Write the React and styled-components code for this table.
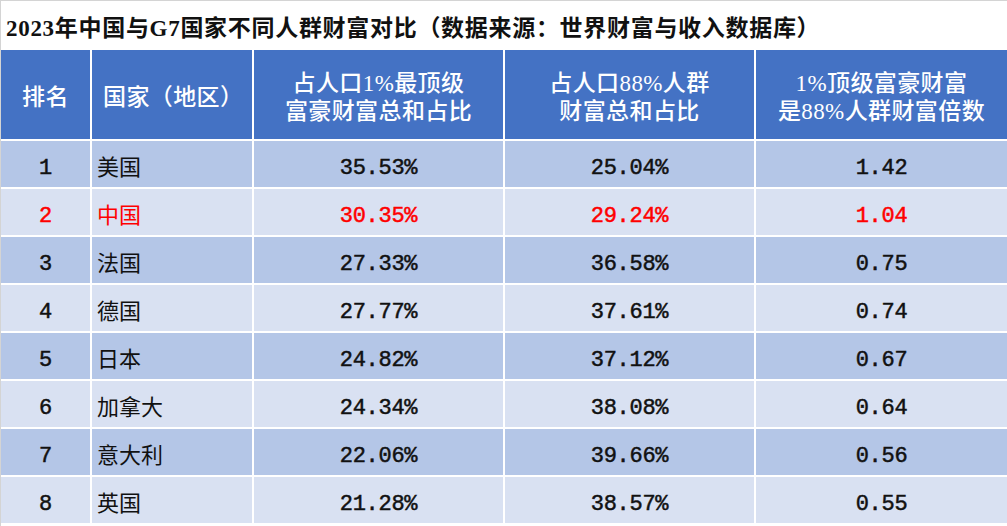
import React from "react";
import styled, { createGlobalStyle } from "styled-components";

const Global = createGlobalStyle`
  html, body {
    margin: 0;
    padding: 0;
    background: #ffffff;
  }
  body {
    font-family: "Liberation Serif", "Noto Sans CJK SC", serif;
  }
`;

const Page = styled.div`
  width: 1007px;
  height: 526px;
  overflow: hidden;
  border-top: 1px solid #d4d4d4;
  border-left: 1px solid #d4d4d4;
  box-sizing: border-box;
`;

const Title = styled.div`
  height: 49px;
  display: flex;
  align-items: center;
  padding-left: 5px;
  font-family: "Liberation Serif", "Noto Sans CJK SC", serif;
  font-size: 23px;
  font-weight: 700;
  letter-spacing: 0.7px;
  color: #111;
  white-space: nowrap;
`;

const Grid = styled.div`
  display: grid;
  grid-template-columns: 89px 160px 249px 249px 1fr;
  grid-template-rows: 89px repeat(8, 46px);
  gap: 2px;
  background: #ffffff;
`;

const HeadCell = styled.div`
  background: #4472c4;
  color: #ffffff;
  display: flex;
  align-items: center;
  justify-content: ${(p) => (p.left ? "flex-start" : "center")};
  padding-left: ${(p) => (p.left ? "11px" : "0")};
  padding-top: 6px;
  text-align: center;
  font-family: "Liberation Serif", "Noto Sans CJK SC", serif;
  font-size: 23px;
  line-height: 28px;
  letter-spacing: 0.4px;
  font-weight: 500;
`;

const Cell = styled.div`
  background: ${(p) => (p.dark ? "#b4c6e7" : "#d9e1f2")};
  color: ${(p) => (p.red ? "#ff0000" : "#111111")};
  display: flex;
  align-items: center;
  justify-content: ${(p) => (p.left ? "flex-start" : "center")};
  padding-left: ${(p) => (p.left ? "5px" : "0")};
  padding-top: 1px;
  box-sizing: border-box;
  font-family: "Noto Sans CJK SC", serif;
  font-size: 22px;
`;

const Num = styled.span`
  display: inline-block;
  margin-top: 7px;
  font-family: "Liberation Mono", monospace;
  font-size: 22px;
  font-weight: 400;
  -webkit-text-stroke: 0.5px currentColor;
  letter-spacing: -0.3px;
`;

const rows = [
  ["1", "美国", "35.53%", "25.04%", "1.42"],
  ["2", "中国", "30.35%", "29.24%", "1.04"],
  ["3", "法国", "27.33%", "36.58%", "0.75"],
  ["4", "德国", "27.77%", "37.61%", "0.74"],
  ["5", "日本", "24.82%", "37.12%", "0.67"],
  ["6", "加拿大", "24.34%", "38.08%", "0.64"],
  ["7", "意大利", "22.06%", "39.66%", "0.56"],
  ["8", "英国", "21.28%", "38.57%", "0.55"],
];

export default function App() {
  return (
    <Page>
      <Global />
      <Title>2023年中国与G7国家不同人群财富对比（数据来源：世界财富与收入数据库）</Title>
      <Grid>
        <HeadCell>排名</HeadCell>
        <HeadCell left>国家（地区）</HeadCell>
        <HeadCell>
          占人口1%最顶级
          <br />
          富豪财富总和占比
        </HeadCell>
        <HeadCell>
          占人口88%人群
          <br />
          财富总和占比
        </HeadCell>
        <HeadCell>
          1%顶级富豪财富
          <br />
          是88%人群财富倍数
        </HeadCell>
        {rows.map((r, i) => {
          const dark = i % 2 === 0;
          const red = r[1] === "中国";
          return (
            <React.Fragment key={r[0]}>
              <Cell dark={dark} red={red}>
                <Num>{r[0]}</Num>
              </Cell>
              <Cell dark={dark} red={red} left>
                {r[1]}
              </Cell>
              <Cell dark={dark} red={red}>
                <Num>{r[2]}</Num>
              </Cell>
              <Cell dark={dark} red={red}>
                <Num>{r[3]}</Num>
              </Cell>
              <Cell dark={dark} red={red}>
                <Num>{r[4]}</Num>
              </Cell>
            </React.Fragment>
          );
        })}
      </Grid>
    </Page>
  );
}
